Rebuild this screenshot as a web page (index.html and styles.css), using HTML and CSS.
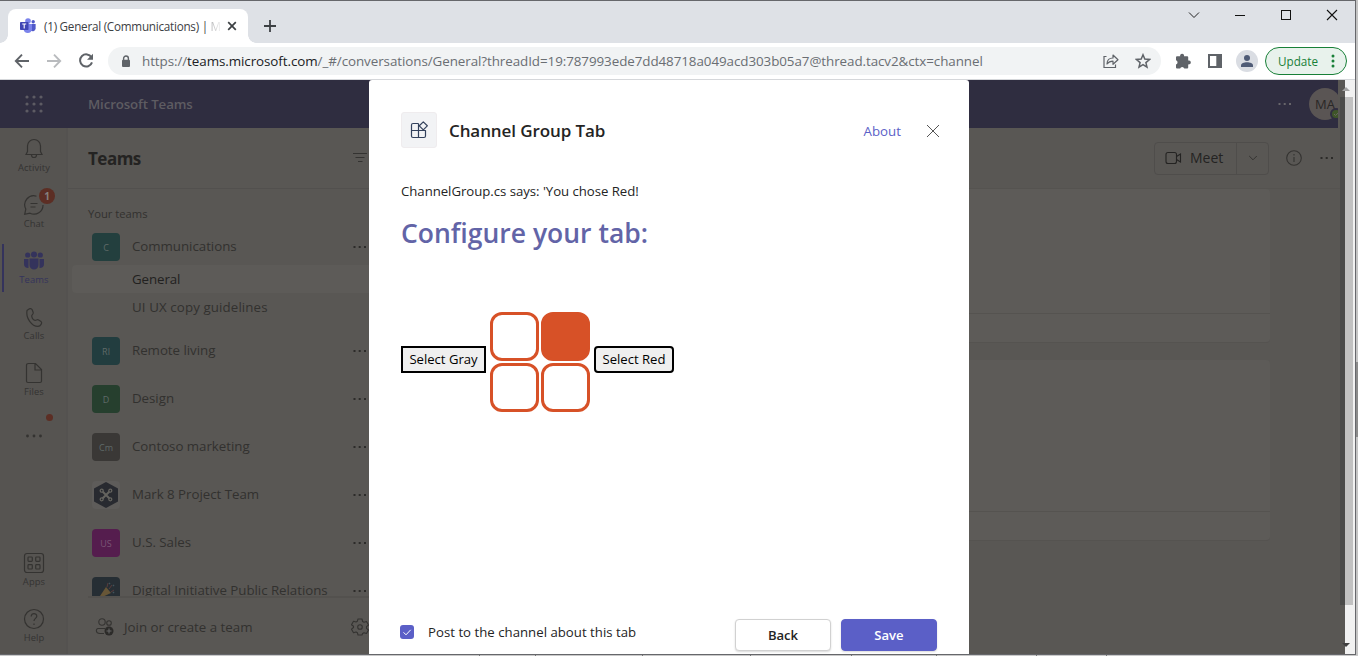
FILE: index.html
```html
<!DOCTYPE html>
<html lang="en">
<head>
<meta charset="utf-8">
<title>General (Communications) | Microsoft Teams</title>
<link rel="stylesheet" href="styles.css">
</head>
<body>
<svg class="defs" width="0" height="0"><defs>
<symbol id="dots" viewBox="0 0 14 4"><rect x="0.5" y="1" width="2" height="2"/><rect x="5.7" y="1" width="2" height="2"/><rect x="11" y="1" width="2" height="2"/></symbol>
</defs></svg>
<div class="desktop">
<div class="window">
  <div class="tabstrip">
    <div class="tab">
      <svg class="favicon" width="16" height="16" viewBox="0 0 16 16"><circle cx="8" cy="3" r="2.8" fill="#7b83eb"/><circle cx="13.2" cy="3.8" r="1.7" fill="#5059c9"/><path d="M10 6h5.6v4.5a3 3 0 0 1-4.6 2.3z" fill="#5059c9"/><path d="M3.5 6H12v5.3a4.3 4.3 0 0 1-8.5 0z" fill="#7b83eb"/><rect x="0" y="4" width="8.5" height="8" rx=".8" fill="#4046b5"/><path d="M2.2 6h4M4.2 6v4.4" stroke="#fff" stroke-width="1.1"/></svg>
      <span class="tab-title">(1) General (Communications) | <span class="fade">M</span></span>
      <svg class="tab-close" width="10" height="10" viewBox="0 0 10 10"><path d="M1.2 1.2l7.6 7.6M8.8 1.2L1.2 8.8" stroke="#3c4043" stroke-width="1.7"/></svg>
    </div>
    <svg class="new-tab" width="14" height="14" viewBox="0 0 14 14"><path d="M7 1v12M1 7h12" stroke="#3c4043" stroke-width="1.8"/></svg>
    <div class="win-controls">
      <svg width="12" height="12" viewBox="0 0 12 12"><path d="M1 3.5l5 5 5-5" fill="none" stroke="#222" stroke-width="1"/></svg>
      <svg width="12" height="12" viewBox="0 0 12 12"><path d="M1 6.5h10" stroke="#111"/></svg>
      <svg width="12" height="12" viewBox="0 0 12 12"><rect x="1.5" y="1.5" width="9" height="9" fill="none" stroke="#111"/></svg>
      <svg width="12" height="12" viewBox="0 0 12 12"><path d="M1 1l10 10M11 1L1 11" stroke="#111" stroke-width="1.1"/></svg>
    </div>
  </div>
  <div class="toolbar">
    <svg class="nav" width="16" height="16" viewBox="0 0 16 16"><path d="M15 8H2M8 1.7L1.8 8 8 14.3" fill="none" stroke="#5f6368" stroke-width="1.9"/></svg>
    <svg class="nav" width="16" height="16" viewBox="0 0 16 16"><path d="M1 8h13M8 1.7L14.2 8 8 14.3" fill="none" stroke="#b9bbbe" stroke-width="1.9"/></svg>
    <svg class="nav" width="16" height="16" viewBox="0 0 16 16"><path d="M13.5 4.4A6.1 6.1 0 1 0 14 9.4" fill="none" stroke="#5f6368" stroke-width="2"/><path d="M15 .8v6H9z" fill="#5f6368"/></svg>
    <div class="address">
      <svg width="10" height="13" viewBox="0 0 10 13"><path d="M2.6 5.5V3.4a2.4 2.4 0 0 1 4.8 0v2.1" fill="none" stroke="#5f6368" stroke-width="1.4"/><rect x="1" y="4.8" width="8" height="7.2" rx="1" fill="#5f6368"/></svg>
      <span class="url">https://<b>teams.microsoft.com</b>/_#/conversations/General?threadId=19:787993ede7dd48718a049acd303b05a7@thread.tacv2&amp;ctx=channel</span>
      <span class="address-icons">
        <svg width="16" height="16" viewBox="0 0 16 16"><path d="M3.500 3.500H1v11h11.500V11.500" fill="none" stroke="#5f6368" stroke-width="1.200"/><path d="M4 11c0-4 2.500-6 6-6V2l5 4.700-5 4.600V8.200c-3 0-4.500.8-6 2.800z" fill="none" stroke="#5f6368" stroke-width="1.200" stroke-linejoin="round"/></svg>
        <svg width="16" height="16" viewBox="0 0 16 16"><path d="M8 1.800l1.800 4.300 4.700.4-3.600 3.100 1.100 4.600L8 11.700l-4 2.500 1.100-4.600L1.500 6.500l4.700-.4z" fill="none" stroke="#5f6368" stroke-width="1.500"/></svg>
      </span>
    </div>
    <svg class="puzzle" width="16" height="16" viewBox="0 0 16 16"><path d="M1 4.300q0-1 1-1h3.200a2 2 0 1 1 3.800 0h3.200q1 0 1 1v3.200a2 2 0 1 1 0 3.800v3.200q0 1-1 1H9.300a2.200 2.200 0 0 0-4.200 0H2q-1 0-1-1v-3a2.200 2.200 0 0 0 0-4.200z" fill="#5f6368"/></svg>
    <svg class="panel" width="14" height="14" viewBox="0 0 14 14"><rect width="14" height="14" fill="#5f6368"/><rect x="2" y="2" width="6.300" height="10" fill="#fff"/></svg>
    <svg class="profile" width="22" height="22" viewBox="0 0 22 22"><circle cx="11" cy="11" r="11" fill="#dadde3"/><circle cx="11" cy="8" r="3" fill="#4f5b76"/><path d="M5 17v-1.500c0-2 3-3.200 6-3.200s6 1.200 6 3.200V17z" fill="#4f5b76"/></svg>
    <div class="update"><span>Update</span><svg width="4" height="14" viewBox="0 0 4 14" fill="#188038"><circle cx="2" cy="2" r="1.500"/><circle cx="2" cy="7" r="1.500"/><circle cx="2" cy="12" r="1.500"/></svg></div>
  </div>
  <div class="page">
    <div class="app">
      <header class="topbar">
        <svg class="waffle" width="20" height="20" viewBox="0 0 20 20" fill="#5d5b63"><circle cx="3" cy="3" r="1.600"/><circle cx="10" cy="3" r="1.600"/><circle cx="17" cy="3" r="1.600"/><circle cx="3" cy="10" r="1.600"/><circle cx="10" cy="10" r="1.600"/><circle cx="17" cy="10" r="1.600"/><circle cx="3" cy="17" r="1.600"/><circle cx="10" cy="17" r="1.600"/><circle cx="17" cy="17" r="1.600"/></svg>
        <span class="brand">Microsoft Teams</span>
        <svg class="top-dots" width="14" height="4" fill="#67656a"><use href="#dots"/></svg>
        <div class="me">MA<svg class="presence" width="12" height="12" viewBox="0 0 12 12"><circle cx="6" cy="6" r="5" fill="#3f5529" stroke="#2f2d40" stroke-width="2"/><path d="M4 6l1.500 1.500L8.500 4.600" fill="none" stroke="#66675e" stroke-width="1"/></svg></div>
      </header>
      <div class="body">
        <nav class="rail">
          <div class="rail-item"><svg width="22" height="22" viewBox="0 0 22 22"><path d="M3 16.500l1.500-3V8a6.500 6.500 0 0 1 13 0v5.500l1.500 3zM8.500 17a2.500 2.500 0 0 0 5 0"/></svg><span>Activity</span></div>
          <div class="rail-item"><svg width="22" height="22" viewBox="0 0 22 22"><path d="M13.500 2.200A9 9 0 0 0 2.800 15L1.700 20.300 7 19.200A9 9 0 0 0 20 11M7.500 9.500h7M7.500 13h5"/></svg><span>Chat</span><i class="badge">1</i></div>
          <div class="rail-item active"><svg width="22" height="22" viewBox="0 0 22 22"><circle cx="4.700" cy="5" r="2.600"/><circle cx="17.300" cy="5" r="2.600"/><circle cx="11" cy="4.500" r="3"/><path d="M1 9h4.500v9Q1 18 1 14zM21 9h-4.500v9Q21 18 21 14zM6.500 8.600h9V15a4.500 4.500 0 0 1-9 0z"/></svg><span>Teams</span></div>
          <div class="rail-item"><svg width="22" height="22" viewBox="0 0 22 22"><path d="M4 4.500c2-1.800 4.200-3 5.200-.7l1 2.700c.5 1.800-1.800 2.200-1.500 3.600.4 2 1.800 4 3.500 4.300 1.200.1 2-1.300 3.400-.5l2.400 1.500c1.800 1.500-.5 4.800-3 5C9 20.500 2.500 12 4 4.500z"/></svg><span>Calls</span></div>
          <div class="rail-item"><svg width="22" height="22" viewBox="0 0 22 22"><path d="M5.500 1.500h7L18.500 7.500V19q0 1.500-1.500 1.500H5Q3.500 20.500 3.500 19V3.500q0-2 2-2zM12 1.500V8h6.500"/></svg><span>Files</span></div>
          <div class="rail-more"><svg width="18" height="4" viewBox="0 0 18 4"><circle cx="2.500" cy="2" r="1.400"/><circle cx="9" cy="2" r="1.400"/><circle cx="15.500" cy="2" r="1.400"/></svg><i class="dot"></i></div>
          <div class="rail-item bottom"><svg width="22" height="22" viewBox="0 0 22 22"><rect x="1.500" y="1.500" width="19" height="19" rx="2.500"/><rect x="5" y="5" width="4.300" height="4.300" rx=".8"/><rect x="12.700" y="5" width="4.300" height="4.300" rx=".8"/><rect x="5" y="12.700" width="4.300" height="4.300" rx=".8"/><rect x="12.700" y="12.700" width="4.300" height="4.300" rx=".8"/></svg><span>Apps</span></div>
          <div class="rail-item"><svg width="22" height="22" viewBox="0 0 22 22"><circle cx="11" cy="11" r="9.500"/><path d="M8.200 8.500c0-4 5.600-3.700 5.600-.3 0 2.100-2.800 2.300-2.800 4.800M11 15.500v1.500"/></svg><span>Help</span></div>
        </nav>
        <aside class="sidebar">
          <div class="side-head"><h2>Teams</h2><svg class="line" width="16" height="12" viewBox="0 0 16 12"><path d="M1 1.500h14M3.500 5.500h9M6 9.500h4.500"/></svg></div>
          <div class="list">
            <div class="caption">Your teams</div>
            <div class="team first"><i class="av teal">C</i><span>Communications</span><svg class="more"><use href="#dots"/></svg></div>
            <div class="channel selected">General</div>
            <div class="channel wide">UI UX copy guidelines</div>
            <div class="team second"><i class="av cyan">Rl</i><span>Remote living</span><svg class="more"><use href="#dots"/></svg></div>
            <div class="team"><i class="av green">D</i><span>Design</span><svg class="more"><use href="#dots"/></svg></div>
            <div class="team"><i class="av gray">Cm</i><span>Contoso marketing</span><svg class="more"><use href="#dots"/></svg></div>
            <div class="team"><i class="av pale"><svg width="28" height="28" viewBox="0 0 28 28"><path d="M14 1l12 6.500v13L14 27 2 20.500v-13z" fill="#282a30"/><path d="M10 10l8 8M18 10l-8 8" stroke="#65645f" stroke-width="2"/><g fill="#282a30" stroke="#65645f" stroke-width="1.300"><circle cx="9.700" cy="9.700" r="1.500"/><circle cx="18.300" cy="9.700" r="1.500"/><circle cx="9.700" cy="18.300" r="1.500"/><circle cx="18.300" cy="18.300" r="1.500"/></g></svg></i><span>Mark 8 Project Team</span><svg class="more"><use href="#dots"/></svg></div>
            <div class="team"><i class="av pink">US</i><span>U.S. Sales</span><svg class="more"><use href="#dots"/></svg></div>
            <div class="team"><i class="av navy"><svg width="28" height="28" viewBox="0 0 28 28"><path d="M6 22l8-12 5 6z" fill="#675637"/><path d="M15 10l1-4M17 12l3-4M19 15l3-2" stroke="#593b3b" stroke-width="1"/><path d="M17 7l1-1M21 9l1-1M21 15l1 1" stroke="#41545c" stroke-width="1.500"/></svg></i><span>Digital Initiative Public Relations</span><svg class="more"><use href="#dots"/></svg></div>
          </div>
          <div class="side-foot">
            <svg class="line" width="20" height="20" viewBox="0 0 20 20"><circle cx="7" cy="5" r="3.200"/><circle cx="14" cy="6" r="2.300"/><path d="M9 16.500H5C0 16.500 1 11.500 3 11.500h7"/><circle cx="14" cy="14" r="4.500" fill="#2c2b29" stroke="none"/><path d="M14 11.500v5M11.500 14h5" stroke="#666"/></svg>
            <span>Join or create a team</span>
            <svg class="line gear" width="18" height="18" viewBox="0 0 18 18"><path d="M7 1h4l.6 2.500 1.400.8 2.500-.8 2 3.500-2 1.700v1.600l2 1.700-2 3.500-2.500-.8-1.400.8L11 17H7l-.6-2.300-1.400-.8-2.500.8-2-3.500 2-1.700V8.200l-2-1.500 2-3.500 2.500.8 1.400-.8z" stroke-linejoin="round"/><circle cx="9" cy="9" r="2.300"/></svg>
          </div>
        </aside>
        <main class="main">
          <div class="main-head">
            <div class="meet"><div class="meet-main"><svg width="17" height="14" viewBox="0 0 17 14"><rect x="1" y="1.500" width="10.500" height="11" rx="2"/><path d="M11.500 5.500L15.500 3v8l-4-2.500"/></svg>Meet</div><div class="meet-drop"><svg width="10" height="6" viewBox="0 0 10 6"><path d="M1.200 1L5 4.800 8.800 1"/></svg></div></div>
            <svg class="line info" width="16" height="16" viewBox="0 0 16 16"><circle cx="8" cy="8" r="7.300"/><path d="M8 7v5M8 4v1.400"/></svg>
            <svg class="more main-more"><use href="#dots"/></svg>
          </div>
          <div class="feed"><div class="post short"></div><div class="post"></div></div>
        </main>
        <div class="inner-scroll"></div>
      </div>
      <div class="modal">
        <div class="modal-head">
          <div class="app-icon"><svg width="18" height="18" viewBox="0 0 18 18"><path d="M8.500 2.500H3Q1.500 2.500 1.500 4v11Q1.500 16.500 3 16.500h11q1.500 0 1.500-1.500V9.500H1.500M8.500 2.500v14M13.300.9l4 3.900-4 4-4-4z" fill="none" stroke="#33415c" stroke-width="1.200" stroke-linejoin="round"/></svg></div>
          <h1>Channel Group Tab</h1>
          <a class="about">About</a>
          <svg class="close" width="14" height="14" viewBox="0 0 14 14"><path d="M1 1l12 12M13 1L1 13" stroke="#555" stroke-width="1"/></svg>
        </div>
        <p class="says">ChannelGroup.cs says: 'You chose Red!</p>
        <h3>Configure your tab:</h3>
        <div class="choice">
          <button class="pick square">Select Gray</button>
          <div class="logo"><i></i><i class="full"></i><i></i><i></i></div>
          <button class="pick">Select Red</button>
        </div>
        <div class="modal-foot">
          <span class="check"><svg width="10" height="10" viewBox="0 0 10 10"><path d="M1.500 5.300l2.500 2.500 4.700-5" fill="none" stroke="#fff" stroke-width="1"/></svg></span>
          <label>Post to the channel about this tab</label>
          <button class="btn back">Back</button>
          <button class="btn save">Save</button>
        </div>
      </div>
    </div>
    <div class="scroll"><svg class="arrow" width="10" height="7" viewBox="0 0 10 7"><path d="M1 6l4-4 4 4z" fill="#a3a3a3"/></svg><div class="thumb"></div><svg class="arrow down" width="10" height="7" viewBox="0 0 10 7"><path d="M1 1l4 4 4-4z" fill="#404040"/></svg></div>
  </div>
</div>
<div class="behind"><div class="behind-thumb"></div></div>
<div class="under"><i class="cell a"></i><i class="cell b"></i><i class="cell c"></i><i class="cell d"></i><i class="cell e"></i><i class="cell f"></i><i class="cell g"></i><i class="cell h"></i></div>
</div>
</body>
</html>
```
FILE: styles.css
```css
* { box-sizing: border-box; }
body { margin: 0; overflow: hidden; font-family: "Open Sans", "Noto Sans", sans-serif; }
h1, h2, h3, p { margin: 0; }
i { font-style: normal; }
svg { display: block; flex: none; }
span, h1, h2, h3, p, label, a { white-space: nowrap; }
.defs { position: absolute; }
.desktop { width: 1358px; height: 656px; display: grid; grid-template: 655px 1px / 1356px 2px; background: #c4c4c4; }
.window { border-top: 1px solid #66676b; border-right: 1px solid #66676b; border-bottom: 1px solid #66676b; display: flex; flex-direction: column; overflow: hidden; background: #fff; }

.tabstrip { height: 42px; flex: none; background: #dee1e6; display: flex; align-items: flex-start; padding: 8px 17px 0 8px; }
.tab { width: 240px; height: 34px; background: #fff; border-radius: 8px 8px 0 0; display: flex; align-items: center; padding-left: 12px; font-size: 11.700px; color: #3c4043; position: relative; }
.tab::before, .tab::after { content: ""; position: absolute; bottom: 0; width: 8px; height: 8px; }
.tab::before { left: -8px; background: radial-gradient(circle at 0 0, #dee1e6 7.500px, #fff 8px); }
.tab::after { right: -8px; background: radial-gradient(circle at 100% 0, #dee1e6 7.500px, #fff 8px); }
.tab-title { margin-left: 8px; width: 176px; letter-spacing: -.250px; }
.fade { background: linear-gradient(90deg, #b5b6b8, #f4f4f4); background-clip: text; color: transparent; }
.tab-close { margin-left: 7px; }
.new-tab { margin: 10px 0 0 15px; }
.win-controls { margin-left: auto; display: flex; gap: 34px; }

.toolbar { height: 37px; flex: none; border-bottom: 1px solid #d5d7da; display: flex; align-items: center; padding-left: 14px; }
.nav { margin-right: 16px; }
.nav + .nav + .nav { margin-right: 14px; }
.address { width: 1053px; height: 28px; border-radius: 14px; background: #f1f3f4; display: flex; align-items: center; padding: 0 10px 0 13px; }
.url { margin-left: 11px; font-size: 13.400px; letter-spacing: -.072px; color: #6a6e73; }
.url b { font-weight: 400; color: #202124; }
.address-icons { margin-left: auto; display: flex; gap: 16px; }
.puzzle { margin-left: 14px; }
.panel { margin-left: 17px; }
.profile { margin-left: 14px; }
.update { margin-left: 7px; width: 82px; height: 28px; border: 1px solid #188038; border-radius: 14px; background: #e8f2ec; color: #188038; font-size: 11.700px; display: flex; align-items: center; padding: 0 11px 0 12px; justify-content: space-between; }

.page { flex: 1; display: flex; min-height: 0; }
.app { width: 1345px; display: flex; flex-direction: column; position: relative; overflow: hidden; color: #32312f; background: #595754; }
.topbar { width: 1338px; height: 48px; flex: none; background: #2f2d40; display: flex; align-items: center; padding-left: 24px; overflow: hidden; }
.brand { margin-left: 44px; font-size: 13.300px; letter-spacing: -.130px; font-weight: 600; color: #5e5c62; }
.top-dots { margin-left: auto; }
.me { position: relative; flex: none; margin-left: 17px; margin-right: -3px; width: 32px; height: 32px; border-radius: 50%; background: #5a5554; color: #292726; font-size: 13px; line-height: 32px; text-align: center; }
.presence { position: absolute; right: -1px; bottom: 0; }
.body { flex: 1; display: flex; min-height: 0; }

.rail { width: 68px; flex: none; background: #565451; display: flex; flex-direction: column; border-right: 2px solid #545250; }
.rail-item { height: 56px; flex: none; display: flex; flex-direction: column; align-items: center; padding-top: 10px; font-size: 9.400px; line-height: 12px; color: #343331; position: relative; padding-left: 2px; }
.rail-item svg { fill: none; stroke: #343331; stroke-width: 1.200; }
.rail-item span { margin-top: 2px; letter-spacing: .100px; }
.rail-item.active { color: #34335c; }
.rail-item.active svg { fill: #34335c; stroke: none; }
.rail-item.active::before { content: ""; position: absolute; left: 2px; top: 4px; width: 2px; height: 48px; background: #34335c; }
.badge { position: absolute; left: 39px; top: 4px; width: 16px; height: 16px; border-radius: 50%; background: #5c2e24; color: #85807d; font-size: 10px; font-weight: 700; line-height: 16px; text-align: center; }
.rail-more { height: 56px; display: flex; justify-content: center; align-items: center; padding-left: 2px; position: relative; fill: #343331; }
.dot { position: absolute; left: 46px; top: 6px; width: 7px; height: 7px; border-radius: 50%; background: #5c2e24; }
.bottom { margin-top: auto; }

.sidebar { width: 320px; flex: none; display: flex; flex-direction: column; }
.side-head { height: 61px; flex: none; border-bottom: 1px solid #52504e; display: flex; align-items: center; padding-left: 20px; }
.side-head h2 { font-size: 17px; line-height: 24px; font-weight: 700; color: #242322; width: 264px; letter-spacing: -.500px; padding-top: 2px; }
.line { fill: none; stroke: #343331; stroke-width: 1.100; }
.list { height: 407px; flex: none; overflow: hidden; padding-top: 16px; font-size: 13.300px; }
.caption { padding-left: 20px; font-size: 11.200px; line-height: 18px; }
.team { height: 48px; display: flex; align-items: center; padding-left: 24px; }
.team.first { height: 36px; margin-top: 6px; }
.team.second { margin-top: 6px; }
.team span { width: 221px; margin-left: 12px; line-height: 20px; position: relative; top: -1px; letter-spacing: -.030px; }
.av { width: 28px; height: 28px; flex: none; border-radius: 4px; font-size: 9px; line-height: 29px; text-align: center; color: #5f6a68; overflow: hidden; }
.teal { background: #233f3e; }
.cyan { background: #223d3f; }
.green { background: #263f2e; }
.gray { background: #3a3836; }
.pale { background: #5e5c5a; }
.pink { background: #551d4e; color: #7a5575; }
.navy { background: #262e34; }
.more { width: 14px; height: 4px; fill: #2c2b29; }
.channel { height: 28px; line-height: 28px; padding-left: 60px; margin-left: 4px; letter-spacing: -.080px; }
.channel.selected { background: #5d5b58; color: #222120; border-radius: 4px; }
.channel.wide { letter-spacing: .110px; }
.side-foot { margin-left: 20px; flex: 1; border-top: 2px solid #53514e; display: flex; align-items: center; padding: 1px 0 0 7px; font-size: 13.300px; }
.side-foot span { margin-left: 9px; width: 227px; }

.main { flex: 1; }
.main-head { height: 61px; border-bottom: 1px solid #555350; display: flex; align-items: center; padding-left: 766px; }
.meet { width: 115px; height: 33px; border: 1px solid #4f4d4b; border-radius: 4px; display: flex; color: #242322; font-size: 14px; }
.meet svg { fill: none; stroke: #242322; stroke-width: 1.100; }
.meet-main { width: 82px; border-right: 1px solid #4f4d4b; display: flex; align-items: center; gap: 8px; padding-left: 10px; font-weight: 500; padding-bottom: 1px; }
.meet-drop { flex: 1; display: flex; align-items: center; justify-content: center; }
.meet .meet-drop svg { stroke: #343331; stroke-width: 1; }
.info { margin-left: 17px; }
.main-more { margin-left: 18px; }
.feed { width: 882px; }
.post { height: 181px; margin-bottom: 17px; background: #5d5b58; border-radius: 4px; border-bottom: 1px solid #555350; display: flex; flex-direction: column; justify-content: flex-end; }
.post::after { content: ""; height: 28px; border-top: 1px solid #555350; }
.post.short { height: 154px; }
.inner-scroll { width: 5px; height: 508px; margin-top: -31px; background: #4a4a49; position: relative; flex: none; }

.scroll { width: 10px; background: #f1f1f1; position: relative; display: flex; flex-direction: column; }
.scroll .arrow { position: relative; left: -4px; margin: 5px 0; }
.thumb { width: 8px; height: 508px; flex: none; background: #c1c1c1; }
.scroll .down { margin-top: auto; }

.modal { position: absolute; left: 369px; top: 0; width: 600px; height: 574px; border-radius: 3px 3px 0 0; background: #fff; color: #242424; padding: 32px 32px 0; display: flex; flex-direction: column; }
.modal-head { height: 36px; display: flex; align-items: center; }
.app-icon { width: 36px; height: 36px; border-radius: 3px; background: #f2f3f5; border: 1px solid #efecee; display: flex; align-items: center; justify-content: center; }
.modal h1 { margin-left: 12px; font-size: 17px; line-height: 24px; font-weight: 600; letter-spacing: -.100px; padding-top: 1px; }
.about { margin-left: auto; margin-right: 25px; padding-top: 2px; font-size: 13.300px; color: #5b5fc7; }
.close { margin: 2px -3px 0 0; }
.says { margin-top: 33px; font-size: 13.200px; line-height: 20px; letter-spacing: -.030px; }
.modal h3 { margin-top: 12px; font-size: 26.500px; line-height: 40px; font-weight: 600; color: #6264a7; }
.choice { margin-top: 59px; display: flex; align-items: center; height: 100px; }
.pick { height: 27px; width: 85px; padding: 0; border: 2px solid #000; border-radius: 4px; background: #efefef; color: #000; font: 13.100px/22px "Open Sans", sans-serif; white-space: nowrap; position: relative; top: -3px; }
.pick:last-child { width: 80px; }
.pick.square { border-radius: 0; }
.logo { display: grid; grid-template-columns: 49px 49px; grid-auto-rows: 49px; gap: 2px; margin: 0 4px; }
.logo i { border: 3px solid #d75127; border-radius: 12px; }
.logo .full { background: #d75127; }
.modal-foot { margin-top: auto; display: flex; align-items: center; padding-bottom: 3px; }
.check { width: 14px; height: 14px; border-radius: 3px; background: #5b5fc7; margin: -6px 14px 0 -1px; display: flex; align-items: center; justify-content: center; }
.modal-foot label { font-size: 13.200px; margin-top: -6px; letter-spacing: .020px; }
.btn { width: 96px; height: 32px; border-radius: 4px; border: 1px solid #d1d1d1; background: #fff; font: 600 13.100px "Open Sans", sans-serif; color: #242424; box-shadow: 0 1px 2px rgba(0, 0, 0, .15); padding: 0; }
.btn.back { margin-left: auto; }
.btn.save { margin: 0 0 0 10px; border-color: #5b5fc7; background: #5b5fc7; color: #fff; }

.behind { background: #c4c4c4; display: flex; align-items: center; padding-top: 144px; }
.behind-thumb { width: 2px; height: 75px; background: #8b8b8b; }
.under { grid-column: 1 / 3; display: flex; background: #c9c9c9; }
.cell { border-right: 1px solid #777; flex: none; }
.a { width: 480px; }
.b { width: 56px; }
.c { width: 107px; }
.d { width: 108px; }
.e { width: 101px; }
.f { width: 85px; }
.g { width: 100px; }
.h { width: 70px; }
```
